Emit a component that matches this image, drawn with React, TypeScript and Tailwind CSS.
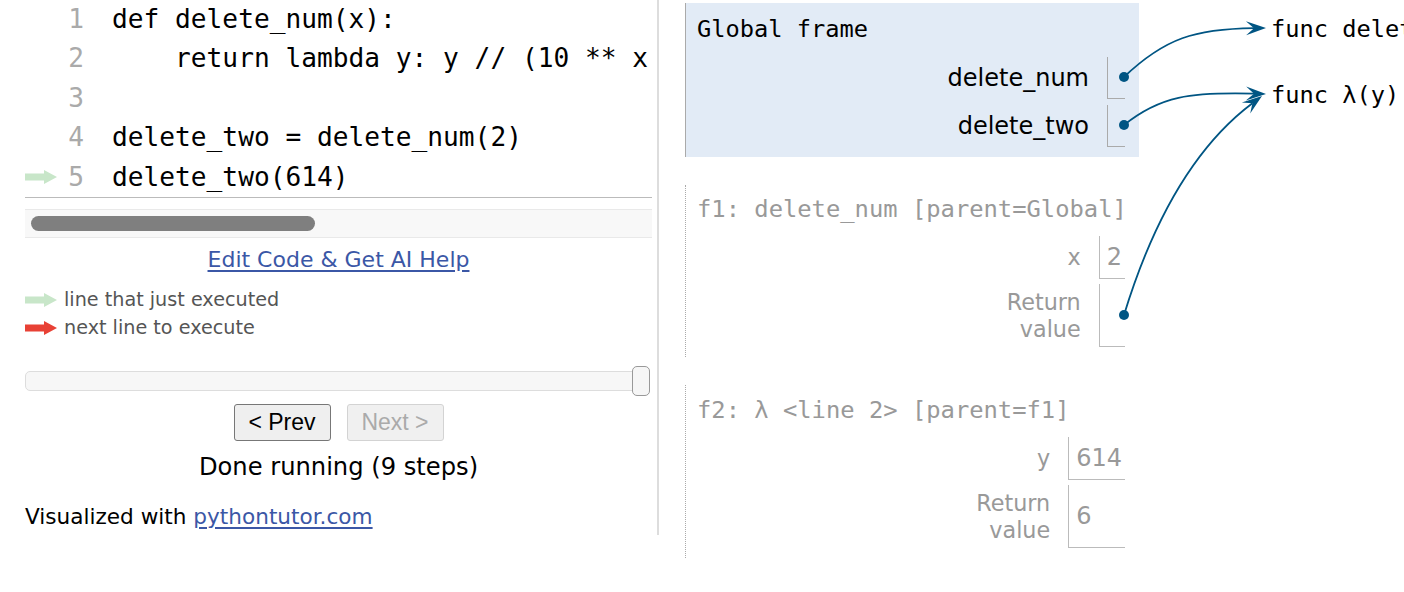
const mono = "font-['DejaVu_Sans_Mono',monospace]";
const sans = "font-['DejaVu_Sans',sans-serif]";

const code = [
  "def delete_num(x):",
  "    return lambda y: y // (10 ** x)",
  "",
  "delete_two = delete_num(2)",
  "delete_two(614)",
];

function LegendArrow({ color }: { color: string }) {
  return (
    <svg width="32" height="16" viewBox="0 0 32 16" className="shrink-0">
      <path d="M0 4.5h19V1l13 7-13 7v-3.5H0z" fill={color} />
    </svg>
  );
}

type Pt = [number, number];

// cubic bezier with a notched arrow head at its end
function Pointer({ from, c1, c2, to }: { from: Pt; c1: Pt; c2: Pt; to: Pt }) {
  const dx = to[0] - c2[0];
  const dy = to[1] - c2[1];
  const len = Math.hypot(dx, dy);
  const ux = dx / len;
  const uy = dy / len;
  const L = 20;
  const W = 7;
  const back: Pt = [to[0] - ux * L, to[1] - uy * L];
  const notch: Pt = [to[0] - ux * L * 0.6, to[1] - uy * L * 0.6];
  const w1: Pt = [back[0] - uy * W, back[1] + ux * W];
  const w2: Pt = [back[0] + uy * W, back[1] - ux * W];
  return (
    <g>
      <path
        d={`M${from[0]} ${from[1]} C${c1[0]} ${c1[1]} ${c2[0]} ${c2[1]} ${notch[0]} ${notch[1]}`}
        fill="none"
        stroke="#005583"
        strokeWidth="1.8"
      />
      <polygon
        points={`${to[0]},${to[1]} ${w1[0]},${w1[1]} ${notch[0]},${notch[1]} ${w2[0]},${w2[1]}`}
        fill="#005583"
      />
      <circle cx={from[0]} cy={from[1]} r="5" fill="#005583" />
    </g>
  );
}

function Row({
  label,
  value,
  active,
  tall,
}: {
  label: React.ReactNode;
  value?: string;
  active?: boolean;
  tall?: boolean;
}) {
  return (
    <>
      <div
        className={`flex items-center justify-end pr-[18px] text-right ${
          active ? "text-[24px] text-black" : "text-[22.3px] leading-[27px] text-[#999]"
        }`}
      >
        {label}
      </div>
      <div
        className={`flex items-center min-w-[18px] pl-[7px] pr-[3px] border-l border-b text-[24px] text-[#999] ${
          active ? "h-[42px] border-[#aaa]" : tall ? "h-[63px] border-[#bbb]" : "h-[43px] border-[#bbb]"
        }`}
      >
        {value}
      </div>
    </>
  );
}

export default function App() {
  return (
    <div className={`relative flex w-[1404px] h-[592px] overflow-hidden bg-white ${sans}`}>
      {/* left: code + controls */}
      <div className="w-[657px] shrink-0 pl-[25px] pr-[5px] flex flex-col">
        <div className={`border-b border-[#bbb] overflow-hidden ${mono} text-[26.2px]`}>
          {code.map((line, i) => (
            <div key={i} className="flex items-center h-[39.4px] whitespace-pre">
              <div className="w-[35px] shrink-0 flex items-center">
                {i === 4 && <LegendArrow color="#c8e6c9" />}
              </div>
              <div className="w-[24px] shrink-0 text-right text-[#aaa]">{i + 1}</div>
              <div className="ml-[28px] w-[536px] shrink-0 overflow-hidden text-black">{line}</div>
            </div>
          ))}
        </div>

        <div className="mt-[11px] h-[29px] bg-[#f8f8f8] border-y border-[#e9e9e9] pl-[6px] pt-[6px]">
          <div className="w-[284px] h-[15px] rounded-full bg-[#7f7f7f]" />
        </div>

        <div className="h-[44px] flex items-center justify-center">
          <a className="text-[22px] text-[#3b57a6] underline underline-offset-[3px]">
            Edit Code &amp; Get AI Help
          </a>
        </div>

        <div className="mt-[4px] flex flex-col text-[19.2px] text-[#555]">
          <div className="h-[28px] flex items-center gap-[7px]">
            <LegendArrow color="#c8e6c9" />
            <span>line that just executed</span>
          </div>
          <div className="h-[28px] flex items-center gap-[7px]">
            <LegendArrow color="#e84135" />
            <span>next line to execute</span>
          </div>
        </div>

        <div className="relative mt-[24px] h-[30px] w-[625px] flex items-center">
          <div className="w-full h-[20px] rounded-[5px] border border-[#ddd] bg-[#f7f7f7]" />
          <div className="absolute right-0 top-0 w-[18px] h-[30px] rounded-[5px] border border-[#999] bg-[#f6f6f6]" />
        </div>

        <div className="mt-[8px] flex justify-center gap-[16px] font-['Liberation_Sans',sans-serif] text-[23px]">
          <button className="w-[97px] h-[37px] rounded-[3px] border border-[#777] bg-[#efefef] text-black">
            &lt; Prev
          </button>
          <button className="w-[97px] h-[37px] rounded-[3px] border border-[#d3d3d3] bg-[#f0f0f0] text-[#aaa]">
            Next &gt;
          </button>
        </div>

        <div className="h-[52px] flex items-center justify-center text-[24.2px] text-black">
          Done running (9 steps)
        </div>

        <div className="h-[48px] flex items-center text-[21.6px] text-black">
          <span>
            Visualized with{" "}
            <a className="text-[#3b57a6] underline underline-offset-[3px]">pythontutor.com</a>
          </span>
        </div>
      </div>

      <div className="w-[2px] h-[535px] bg-[#ddd] shrink-0" />

      {/* right: frames + heap */}
      <div className="flex pl-[26px]">
        <div className="w-[454px] shrink-0 pt-[3px] flex flex-col gap-[28px]">
          <div className="h-[154px] bg-[#e2ebf6] border-l border-[#aaa] pt-[12px] pr-[14px]">
            <div className={`${mono} text-[23.7px] leading-[28px] pl-[11px] text-black`}>
              Global frame
            </div>
            <div className="mt-[14px] ml-auto w-fit grid grid-cols-[auto_auto] gap-y-[6px]">
              <Row label="delete_num" active />
              <Row label="delete_two" active />
            </div>
          </div>

          <div className="h-[172px] border-l border-dotted border-[#aaa] pt-[10px] pr-[14px]">
            <div className={`${mono} text-[23.8px] leading-[28px] pl-[11px] text-[#999] whitespace-pre`}>
              f1: delete_num [parent=Global]
            </div>
            <div className="mt-[13px] ml-auto w-fit grid grid-cols-[auto_auto] gap-y-[5px]">
              <Row label="x" value="2" />
              <Row label={<span>Return<br />value</span>} tall />
            </div>
          </div>

          <div className="h-[173px] border-l border-dotted border-[#aaa] pt-[11px] pr-[14px]">
            <div className={`${mono} text-[23.8px] leading-[28px] pl-[11px] text-[#999] whitespace-pre`}>
              f2: λ &lt;line 2&gt; [parent=f1]
            </div>
            <div className="mt-[13px] ml-auto w-fit grid grid-cols-[auto_auto] gap-y-[5px]">
              <Row label="y" value="614" />
              <Row label={<span>Return<br />value</span>} value="6" tall />
            </div>
          </div>
        </div>

        <div className={`ml-[132px] pt-[15px] flex flex-col gap-[38px] ${mono} text-[23.7px] leading-[28px] text-black whitespace-pre`}>
          <div>func delete_num(x)</div>
          <div>func λ(y)</div>
        </div>
      </div>

      <svg className="absolute inset-0 pointer-events-none" width="1404" height="592">
        <Pointer from={[1124, 77]} c1={[1165, 38]} c2={[1195, 29]} to={[1266, 28]} />
        <Pointer from={[1124, 125]} c1={[1160, 96]} c2={[1190, 92]} to={[1266, 94]} />
        <Pointer from={[1124, 315]} c1={[1150, 230]} c2={[1190, 150]} to={[1262, 96]} />
      </svg>
    </div>
  );
}
